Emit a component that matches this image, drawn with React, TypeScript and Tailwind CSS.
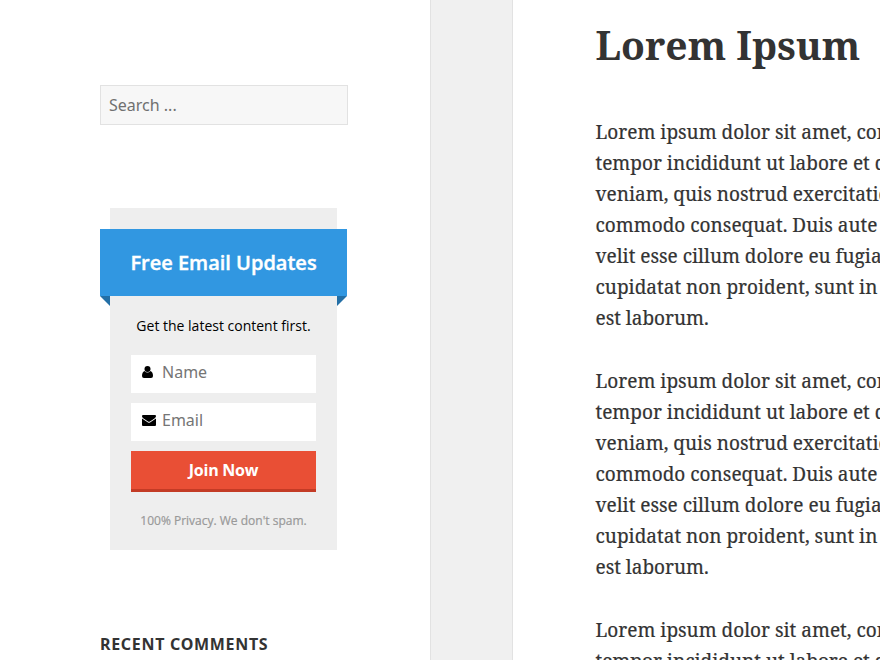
import React from "react";

const paragraph = [
  "Lorem ipsum dolor sit amet, consectetur adipisicing elit, sed do eiusmod",
  "tempor incididunt ut labore et dolore magna aliqua. Ut enim ad minim",
  "veniam, quis nostrud exercitation ullamco laboris nisi ut aliquip ex ea",
  "commodo consequat. Duis aute irure dolor in reprehenderit in voluptate",
  "velit esse cillum dolore eu fugiat nulla pariatur. Excepteur sint occaecat",
  "cupidatat non proident, sunt in culpa qui officia deserunt mollit anim id",
  "est laborum.",
];

export default function App() {
  return (
    <div className="flex h-[660px] w-[880px] overflow-hidden bg-[#f0f0f0] font-['Open_Sans','Noto_Sans',sans-serif]">
      <aside className="w-[431px] shrink-0 border-r border-[#e2e2e2] bg-white pl-[100px] pt-[85px]">
        <input
          placeholder="Search ..."
          className="block h-10 w-[248px] border border-[#e2e2e2] bg-[#f7f7f7] px-2 text-base font-['Noto_Sans'] placeholder:text-[#707070]"
        />
        <section className="mt-[83px] flex h-[342px] w-[247px] flex-col items-center">
          <div className="h-[21px] w-[227px] bg-[#eee]" />
          <h2 className="flex h-[67px] w-full items-center justify-center bg-[#3197e1] text-[20px] font-semibold text-white [-webkit-text-stroke:0.4px_white]">
            Free Email Updates
          </h2>
          <div className="flex w-full">
            <svg className="h-[10px] w-[10px]" viewBox="0 0 10 10"><path d="M0 0H10V10Z" fill="#236fa6" /></svg>
            <div className="flex h-[254px] w-[227px] flex-col items-center bg-[#eee]">
              <p className="mt-[19px] h-[40px] text-sm leading-[22px] text-black">Get the latest content first.</p>
              <label className="flex h-[38px] w-[185px] items-center bg-white pb-1 pl-[11px]">
                <svg width="11" height="12" viewBox="0 0 11 12"><path d="M2.5 5Q0 6 0 10Q0 12 2 12H9Q11 12 11 10Q11 6 8.5 5Q5.5 8 2.5 5Z" /><circle cx="5.5" cy="3" r="3" /></svg>
                <input placeholder="Name" className="ml-[9px] h-8 w-[140px] text-base font-['Noto_Sans'] placeholder:text-[#757575]" />
              </label>
              <label className="mt-[10px] flex h-[38px] w-[185px] items-center bg-white pb-1 pl-[11px]">
                <svg width="14" height="11" viewBox="0 0 14 11"><path d="M1 0H13Q14 0 14 1.3Q14 2.4 12.5 3.5L8 6.4Q7 7 6 6.4L1.2 3.2Q0 2.3 0 1.2Q0 0 1 0ZM0 3.6L6 7.4Q7 8 8 7.4L14 3.6V10Q14 11 13 11H1Q0 11 0 10Z" /></svg>
                <input placeholder="Email" className="ml-1.5 h-8 w-[140px] text-base font-['Noto_Sans'] placeholder:text-[#757575]" />
              </label>
              <button className="mt-[10px] h-[41px] w-[185px] border-b-[3px] border-[#c33b25] bg-[#e94f35] text-base font-bold tracking-[-0.25px] text-white">Join Now</button>
              <p className="mt-[18px] text-xs leading-[22px] text-[#999] [-webkit-text-stroke:0.2px_#999]">100% Privacy. We don't spam.</p>
            </div>
            <svg className="h-[10px] w-[10px]" viewBox="0 0 10 10"><path d="M0 0H10L0 10Z" fill="#236fa6" /></svg>
          </div>
        </section>
        <h2 className="mt-[82px] text-base font-bold leading-6 tracking-[0.7px] text-[#333] font-['Noto_Sans']">RECENT COMMENTS</h2>
      </aside>
      <main className="ml-[81px] w-[368px] shrink-0 overflow-hidden border-l border-[#e2e2e2] bg-white pl-[82.5px] pt-[21px] font-['Noto_Serif','Droid_Serif','DejaVu_Serif',serif] text-[#333]">
        <h1 className="whitespace-nowrap text-[39px] font-bold leading-[48px]">Lorem Ipsum</h1>
        <div className="mt-12 text-[19px] leading-[31px] [-webkit-text-stroke:0.2px_#333]">
          {[0, 1, 2].map((i) => (
            <p key={i} className="mb-8">
              {paragraph.map((line) => (
                <span key={line} className="block whitespace-nowrap">{line}</span>
              ))}
            </p>
          ))}
        </div>
      </main>
    </div>
  );
}
